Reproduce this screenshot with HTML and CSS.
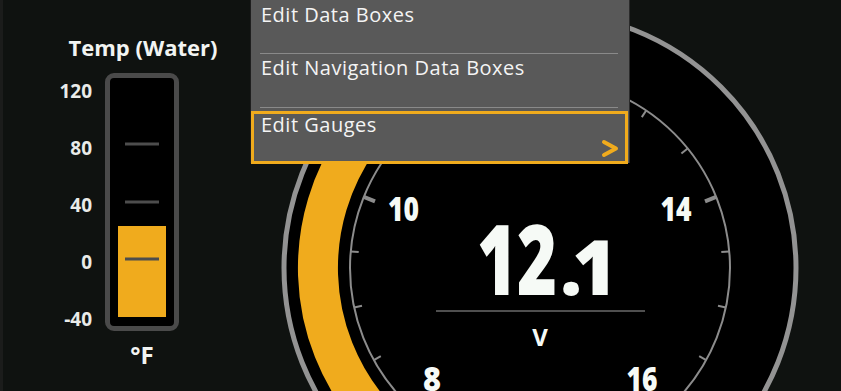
FILE: index.html
```html
<!DOCTYPE html>
<html lang="en">
<head>
    <meta charset="UTF-8">
    <meta name="viewport" content="width=device-width, initial-scale=1.0">
    <title>Gauges</title>
    <link rel="stylesheet" href="styles.css">
</head>
<body>
    <div class="screen">
        <div class="temp-panel">
            <h2 class="temp-title">Temp (Water)</h2>
            <div class="temp-gauge">
                <div class="temp-scale">
                    <span>120</span>
                    <span>80</span>
                    <span>40</span>
                    <span>0</span>
                    <span>-40</span>
                </div>
                <div class="tube">
                    <svg width="64" height="248" viewBox="0 0 64 248">
                        <rect x="8" y="148" width="48" height="91" fill="#f0ab1d"/>
                        <g stroke="#4d4d4d" stroke-width="3">
                            <line x1="15" y1="66" x2="49" y2="66"/>
                            <line x1="15" y1="124" x2="49" y2="124"/>
                            <line x1="15" y1="181" x2="49" y2="181"/>
                        </g>
                    </svg>
                </div>
                <div class="temp-unit">°F</div>
            </div>
        </div>

        <div class="gauge-panel">
            <svg class="dial" width="591" height="391" viewBox="250 0 591 391">
                <circle cx="540" cy="268" r="256" fill="#000" stroke="#939393" stroke-width="5"/>
                <path d="M 429 460.3 A 222 222 0 0 1 553.2 46.4" fill="none" stroke="#f0ab1d" stroke-width="40"/>
                <circle cx="540" cy="268" r="190" fill="none" stroke="#8c8c8c" stroke-width="2"/>

                <!-- minor ticks -->
                <g stroke="#8c8c8c" stroke-width="2">
                    <line x1="373.8" y1="360.1" x2="380.8" y2="356.2"/>
                    <line x1="354.2" y1="307.5" x2="362.0" y2="305.8"/>
                    <line x1="350.7" y1="251.4" x2="358.7" y2="252.1"/>
                    <line x1="392.3" y1="148.4" x2="398.6" y2="153.5"/>
                    <line x1="433.8" y1="110.5" x2="438.2" y2="117.1"/>
                    <line x1="484.4" y1="86.3" x2="486.8" y2="94.0"/>
                    <line x1="595.6" y1="86.3" x2="593.2" y2="94.0"/>
                    <line x1="646.2" y1="110.5" x2="641.8" y2="117.1"/>
                    <line x1="687.6" y1="148.4" x2="681.4" y2="153.5"/>
                    <line x1="729.3" y1="251.4" x2="721.3" y2="252.1"/>
                    <line x1="725.8" y1="307.5" x2="718.0" y2="305.8"/>
                    <line x1="706.2" y1="360.1" x2="699.2" y2="356.2"/>
                </g>
                <!-- major ticks -->
                <g stroke="#8c8c8c" stroke-width="4">
                    <line x1="408.0" y1="404.7" x2="416.3" y2="396.0"/>
                    <line x1="363.8" y1="196.8" x2="375.0" y2="201.3"/>
                    <line x1="540" y1="78" x2="540" y2="90"/>
                    <line x1="716.2" y1="196.8" x2="705.0" y2="201.3"/>
                    <line x1="672.0" y1="404.7" x2="663.7" y2="396.0"/>
                </g>

                <g class="dial-label">
                    <text x="403.5" y="221" font-size="34" textLength="31" lengthAdjust="spacingAndGlyphs">10</text>
                    <text x="676" y="221" font-size="34" textLength="31" lengthAdjust="spacingAndGlyphs">14</text>
                    <text x="432" y="391" font-size="34" textLength="18" lengthAdjust="spacingAndGlyphs">8</text>
                    <text x="642" y="391" font-size="34" textLength="31" lengthAdjust="spacingAndGlyphs">16</text>
                </g>

                <g class="dial-value">
                    <text x="477" y="295" font-size="98" textLength="80" lengthAdjust="spacingAndGlyphs">12</text>
                    <text x="560" y="295" font-size="77" letter-spacing="-10">.1</text>
                </g>
                <line x1="436" y1="311" x2="645" y2="311" stroke="#4f4f4f" stroke-width="2"/>
                <text class="dial-unit" x="540" y="346" font-size="24">V</text>
            </svg>
        </div>

        <div class="menu">
            <div class="menu-item first">Edit Data Boxes</div>
            <div class="menu-item">Edit Navigation Data Boxes</div>
            <div class="menu-item selected">
                <span>Edit Gauges</span>
                <svg class="chevron" width="18" height="19" viewBox="0 0 18 19">
                    <polyline points="3,3 15,9.5 3,16" fill="none" stroke="#f0ab1d" stroke-width="4" stroke-linecap="round" stroke-linejoin="round"/>
                </svg>
            </div>
        </div>
    </div>
</body>
</html>
```

FILE: styles.css
```css
body {
    margin: 0;
    padding: 0;
    background-color: #0f1210;
    color: #f2f4f2;
    font-family: "Open Sans", "Noto Sans", sans-serif;
    overflow: hidden;
}

.screen {
    position: relative;
    display: flex;
    width: 841px;
    height: 391px;
    border-left: 3px solid #1b1c1b;
    box-sizing: border-box;
}

.temp-panel {
    width: 247px;
    padding-left: 33px;
    box-sizing: border-box;
    flex-shrink: 0;
}

.temp-title {
    width: 214px;
    margin: 0;
    padding-top: 32px;
    font-size: 22px;
    line-height: 30px;
    font-weight: bold;
    text-align: center;
}

.temp-gauge {
    display: grid;
    grid-template-columns: 56px 74px;
    column-gap: 13px;
    margin-top: 1px;
}

.temp-scale {
    display: flex;
    flex-direction: column;
    align-items: flex-end;
    font-size: 19px;
    font-weight: bold;
    color: #e9ebe9;
}

.temp-scale span {
    height: 57px;
    line-height: 57px;
}

.tube {
    margin-top: 10px;
    width: 74px;
    height: 258px;
    box-sizing: border-box;
    border: 5px solid #4a4a4a;
    border-radius: 9px;
    background-color: #000;
}

.tube svg {
    display: block;
}

.temp-unit {
    grid-column: 2;
    margin-top: -8px;
    font-size: 24px;
    line-height: 30px;
    font-weight: bold;
    text-align: center;
}

.gauge-panel {
    flex: 1;
}

.dial {
    display: block;
}

.dial text {
    font-family: "Open Sans", sans-serif;
    font-weight: bold;
    fill: #f6faf6;
}

.dial-label text,
.dial-value text {
    font-weight: 800;
}

.dial-label text,
.dial-unit {
    text-anchor: middle;
}

.menu {
    position: absolute;
    top: 0;
    left: 247px;
    width: 380px;
    height: 163px;
    box-sizing: border-box;
    background-color: #595959;
    border-left: 1px solid #1e1e1e;
    border-right: 1px solid #2b2b2b;
    font-size: 20px;
    letter-spacing: 0.5px;
    color: #f4f4f4;
}

.menu-item {
    height: 54px;
    box-sizing: border-box;
    margin: 0 11px 0 9px;
    padding-left: 1px;
    line-height: 27px;
    border-bottom: 1px solid #8a8a8a;
}

.menu-item.first {
    padding-top: 1px;
}

.menu-item.selected {
    display: flex;
    justify-content: space-between;
    height: 53px;
    margin: 3px 1px 0 0;
    padding: 0 6px 0 7px;
    line-height: 21px;
    border: 3px solid #f0ab1d;
}

.chevron {
    align-self: flex-end;
    margin-bottom: 3px;
}
```
